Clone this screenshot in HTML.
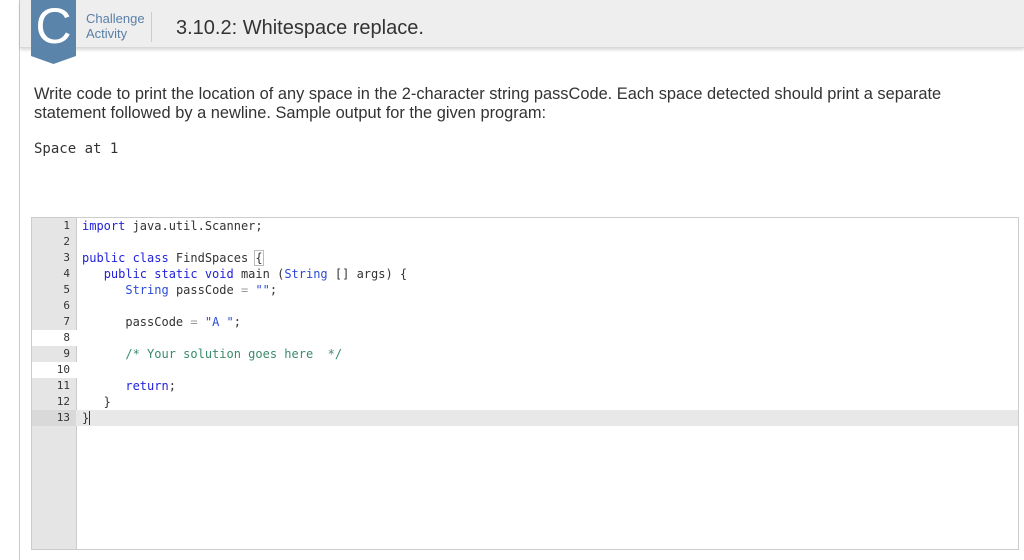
<!DOCTYPE html>
<html><head><style>
body{margin:0;width:1024px;height:552px;background:#fff;position:relative;overflow:hidden;font-family:"Liberation Sans",sans-serif}
.card{position:absolute;left:19px;top:0;width:1010px;height:560px;border-left:1px solid #ccc}
.hdr{position:absolute;left:20px;top:0;width:1004px;height:47px;background:#eeeeee;border-bottom:1px solid #d8d8d8;box-shadow:0 2px 3px rgba(0,0,0,.15)}
.logo{position:absolute;left:31px;top:0;width:45px;height:64px}
.lab{position:absolute;left:86px;top:11px;font-size:13px;line-height:15px;color:#5a7fa8}
.sep{position:absolute;left:151px;top:12px;width:1px;height:30px;background:#ccc}
.title{position:absolute;left:176px;top:17px;font-size:20px;color:#333}
.p{position:absolute;left:34px;top:85px;font-size:16.4px;line-height:19px;color:#333;width:970px}
.mono{font-family:"DejaVu Sans Mono","Liberation Mono",monospace}
.out{position:absolute;left:34px;top:141px;font-size:14px;color:#333}
.ed{position:absolute;left:31px;top:217px;width:986px;height:331px;border:1px solid #ccc;background:#fff}
.gut{position:absolute;left:0;top:0;width:44px;height:331px;background:#e5e5e5;border-right:1px solid #ccc}
.ln{position:absolute;left:0;width:38px;text-align:right;font-size:11px;color:#333;height:16px;line-height:16px}
.cl{position:absolute;left:50px;font-size:12px;height:16px;line-height:16px;white-space:pre;color:#333}
.k{color:#2222dd}.s{color:#2a4bd7}.c{color:#3a8a6a}.o{color:#999}
</style></head><body>
<div class="card"></div>
<div class="hdr"></div>
<svg class="logo" viewBox="0 0 45 64"><path d="M0 0H45V56L22.5 64L0 56Z" fill="#5b84ab"/><text x="22.5" y="43" text-anchor="middle" font-family="Liberation Sans" font-size="50" fill="#fff">C</text></svg>
<div class="lab">Challenge<br>Activity</div>
<div class="sep"></div>
<div class="title">3.10.2: Whitespace replace.</div>
<div class="p">Write code to print the location of any space in the 2-character string passCode. Each space detected should print a separate statement followed by a newline. Sample output for the given program:</div>
<div class="out mono">Space at 1</div>
<div class="ed mono">
<div class="gut"></div>
<div style="position:absolute;left:0;top:112px;width:45px;height:16px;background:#fff"></div>
<div style="position:absolute;left:0;top:144px;width:45px;height:16px;background:#fff"></div>
<div style="position:absolute;left:0;top:192px;width:986px;height:16px;background:#e8e8e8"></div>
<div style="position:absolute;left:0;top:192px;width:44px;height:16px;background:#d9d9d9"></div>
<div class="ln" style="top:0">1</div><div class="ln" style="top:16px">2</div><div class="ln" style="top:32px">3</div><div class="ln" style="top:48px">4</div><div class="ln" style="top:64px">5</div><div class="ln" style="top:80px">6</div><div class="ln" style="top:96px">7</div><div class="ln" style="top:112px">8</div><div class="ln" style="top:128px">9</div><div class="ln" style="top:144px">10</div><div class="ln" style="top:160px">11</div><div class="ln" style="top:176px">12</div><div class="ln" style="top:192px">13</div>
<div class="cl" style="top:0"><span class="k">import</span> java.util.Scanner;</div>
<div class="cl" style="top:32px"><span class="k">public class</span> FindSpaces <span style="outline:1px solid #bbb">{</span></div>
<div class="cl" style="top:48px">   <span class="k">public static void</span> main (<span class="s">String</span> [] args) {</div>
<div class="cl" style="top:64px">      <span class="s">String</span> passCode <span class="o">=</span> <span class="s">""</span>;</div>
<div class="cl" style="top:96px">      passCode <span class="o">=</span> <span class="s">"A "</span>;</div>
<div class="cl" style="top:128px">      <span class="c">/* Your solution goes here  */</span></div>
<div class="cl" style="top:160px">      <span class="k">return</span>;</div>
<div class="cl" style="top:176px">   }</div>
<div class="cl" style="top:192px">}<span style="border-left:1px solid #333"></span></div>
</div>
</body></html>
